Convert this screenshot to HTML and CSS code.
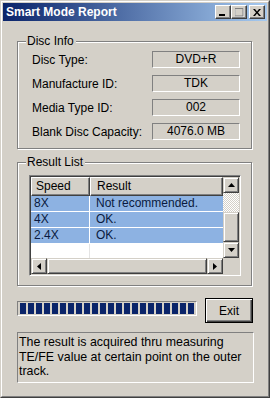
FILE: index.html
```html
<!DOCTYPE html>
<html lang="en">
<head>
<meta charset="UTF-8" />
<title>Smart Mode Report</title>
<link rel="stylesheet" href="styles.css">
</head>
<body>

<div class="window">
  <div class="window-inner">
    <div class="titlebar">
      <span class="title">Smart Mode Report</span>
      <div class="title-buttons">
        <span class="tbtn"><svg width="8" height="7" viewBox="0 0 8 7"><rect x="0" y="5" width="6" height="2" fill="#000"/></svg></span>
        <span class="tbtn"><svg width="9" height="9" viewBox="0 0 9 9"><rect x="0.5" y="0.5" width="8" height="8" fill="none" stroke="#fff"/><rect x="0" y="0" width="8" height="8" fill="none" stroke="#808080"/><rect x="0" y="0" width="8" height="1" fill="#808080"/></svg></span>
        <span class="tbtn close"><svg width="8" height="7" viewBox="0 0 8 7"><path d="M0 0h2l2 2.5 2-2.5h2l-3 3.5 3 3.5h-2l-2-2.5-2 2.5h-2l3-3.5z" fill="#000"/></svg></span>
      </div>
    </div>

    <div class="content">
      <div class="group disc-info">
        <span class="legend">Disc Info</span>
        <div class="info-row"><span>Disc Type:</span><span class="value">DVD+R</span></div>
        <div class="info-row"><span>Manufacture ID:</span><span class="value">TDK</span></div>
        <div class="info-row"><span>Media Type ID:</span><span class="value">002</span></div>
        <div class="info-row"><span>Blank Disc Capacity:</span><span class="value">4076.0 MB</span></div>
      </div>

      <div class="group result-list">
        <span class="legend">Result List</span>
        <div class="listview">
          <div class="list-main">
            <div class="list-header">
              <span class="col-speed">Speed</span>
              <span class="col-result">Result</span>
            </div>
            <div class="list-row selected"><span class="col-speed">8X</span><span class="col-result">Not recommended.</span></div>
            <div class="list-row selected"><span class="col-speed">4X</span><span class="col-result">OK.</span></div>
            <div class="list-row selected"><span class="col-speed">2.4X</span><span class="col-result">OK.</span></div>
            <div class="list-row empty"><span class="col-speed"></span><span class="col-result"></span></div>
          </div>
          <div class="vscroll">
            <span class="sbtn"><svg width="7" height="4" viewBox="0 0 7 4"><path d="M3.5 0L7 4H0z" fill="#000"/></svg></span>
            <span class="track"></span>
            <span class="thumb"></span>
            <span class="sbtn"><svg width="7" height="4" viewBox="0 0 7 4"><path d="M0 0h7L3.5 4z" fill="#000"/></svg></span>
          </div>
          <div class="hscroll">
            <span class="sbtn"><svg width="4" height="7" viewBox="0 0 4 7"><path d="M4 0v7L0 3.5z" fill="#000"/></svg></span>
            <span class="hthumb"></span>
            <span class="sbtn"><svg width="4" height="7" viewBox="0 0 4 7"><path d="M0 0l4 3.5L0 7z" fill="#000"/></svg></span>
          </div>
          <div class="corner"></div>
        </div>
      </div>

      <div class="action-row">
        <div class="progress"><div class="progress-fill"></div></div>
        <button class="exit-btn">Exit</button>
      </div>

      <div class="status">The result is acquired thru measuring TE/FE value at certain point on the outer track.</div>
    </div>
  </div>
</div>

</body>
</html>
```

FILE: styles.css
```css
body {
  margin: 0;
  padding: 0;
  font-family: 'Liberation Sans', Arial, sans-serif;
  font-size: 12px;
  color: #000;
  background: #d4d0c8;
}
.window {
  width: 270px;
  height: 398px;
  box-sizing: border-box;
  border: 1px solid;
  border-color: #d4d0c8 #404040 #404040 #d4d0c8;
  background: #d4d0c8;
}
.window-inner {
  height: 100%;
  box-sizing: border-box;
  border: 1px solid;
  border-color: #fff #808080 #808080 #fff;
  padding: 1px;
  display: flex;
  flex-direction: column;
}
/* Barra del titolo */
.titlebar {
  height: 18px;
  display: flex;
  align-items: center;
  justify-content: space-between;
  background: linear-gradient(to right, #0a246a, #a6caf0);
  padding: 0 2px 0 3px;
}
.title {
  color: #fff;
  font-weight: 700;
  font-size: 12px;
}
.title-buttons {
  display: flex;
  align-items: center;
}
.tbtn {
  width: 16px;
  height: 14px;
  box-sizing: border-box;
  background: #d4d0c8;
  border: 1px solid;
  border-color: #fff #404040 #404040 #fff;
  box-shadow: inset -1px -1px #808080;
  display: flex;
  align-items: center;
  justify-content: center;
}
.tbtn.close {
  margin-left: 2px;
}
.content {
  flex: 1;
  padding: 0 15px 0 14px;
  display: flex;
  flex-direction: column;
}
/* Gruppi */
.group {
  border: 1px solid #808080;
  box-shadow: inset 1px 1px #fff, 1px 1px #fff;
  display: flex;
  flex-direction: column;
}
.legend {
  align-self: flex-start;
  background: #d4d0c8;
  margin: -8px 0 0 8px;
  padding: 0 2px 0 1px;
  line-height: 14px;
}
.disc-info {
  margin-top: 20px;
  height: 108px;
  box-sizing: border-box;
  padding: 0 11px 7px 14px;
  gap: 7px;
}
.disc-info .legend {
  margin-left: -6px;
  margin-bottom: -4px;
}
.info-row {
  display: flex;
  justify-content: space-between;
  align-items: center;
  height: 17px;
}
.value {
  width: 88px;
  height: 17px;
  box-sizing: border-box;
  border: 1px solid;
  border-color: #808080 #fff #fff #808080;
  text-align: center;
  line-height: 15px;
}
.result-list {
  margin-top: 13px;
  padding: 0 10px 9px 11px;
}
.result-list .legend {
  margin-left: -3px;
}
/* Lista */
.listview {
  margin-top: 6px;
  border: 1px solid;
  border-color: #808080 #fff #fff #808080;
  box-shadow: inset 1px 1px #404040, inset -1px -1px #d4d0c8;
  padding: 1px;
  background: #fff;
  display: grid;
  grid-template-columns: 192px 16px;
  grid-template-rows: 81px 16px;
}
.list-main {
  overflow: hidden;
}
.list-header {
  display: flex;
  height: 19px;
  background: #d4d0c8;
}
.list-header span {
  box-sizing: border-box;
  border: 1px solid;
  border-color: #fff #404040 #404040 #fff;
  box-shadow: inset -1px -1px #808080;
  line-height: 17px;
  padding-left: 4px;
}
.col-speed {
  width: 59px;
  flex: none;
}
.col-result {
  flex: 1;
}
.list-header .col-result {
  padding-left: 6px;
}
.list-row {
  display: flex;
  height: 16px;
  line-height: 15px;
  border-bottom: 1px solid #fff;
  box-sizing: border-box;
}
.list-row.selected {
  background: #8db2e2;
  color: #0a1a40;
}
.list-row span {
  padding-left: 3px;
}
.list-row .col-speed {
  border-right: 1px solid #fff;
  box-sizing: border-box;
}
.list-row .col-result {
  padding-left: 6px;
}
.list-row.empty {
  height: 14px;
  border: none;
}
.list-row.empty .col-speed {
  border-right-color: #e4e4e4;
}
.vscroll {
  display: flex;
  flex-direction: column;
}
.sbtn {
  width: 16px;
  height: 16px;
  box-sizing: border-box;
  flex: none;
  background: #d4d0c8;
  border: 1px solid;
  border-color: #d4d0c8 #404040 #404040 #d4d0c8;
  box-shadow: inset 1px 1px #fff, inset -1px -1px #808080;
  display: flex;
  align-items: center;
  justify-content: center;
}
.track {
  flex: 19px 0 0;
  background: repeating-conic-gradient(#fff 0 25%, #d4d0c8 0 50%) 0 0 / 2px 2px;
}
.thumb, .hthumb {
  flex: 1;
  box-sizing: border-box;
  background: #d4d0c8;
  border: 1px solid;
  border-color: #d4d0c8 #404040 #404040 #d4d0c8;
  box-shadow: inset 1px 1px #fff, inset -1px -1px #808080;
}
.hscroll {
  display: flex;
}
.corner {
  background: #d4d0c8;
}
/* Barra di avanzamento e pulsante */
.action-row {
  display: flex;
  justify-content: space-between;
  align-items: flex-start;
  margin-top: 12px;
  margin-right: -1px;
}
.progress {
  margin-top: 3px;
  width: 180px;
  height: 15px;
  box-sizing: border-box;
  border: 1px solid;
  border-color: #808080 #fff #fff #808080;
  padding: 1px 1px 1px 2px;
}
.progress-fill {
  height: 100%;
  background: repeating-linear-gradient(to right, #0a246a 0 6px, transparent 6px 8px);
}
.exit-btn {
  width: 48px;
  height: 25px;
  box-sizing: border-box;
  font-family: inherit;
  font-size: 12px;
  color: #000;
  background: #d4d0c8;
  border: 1px solid #000;
  box-shadow: inset 1px 1px #fff, inset -1px -1px #404040, inset -2px -2px #808080;
  padding: 0;
}
.status {
  margin-top: 9px;
  margin-right: -2px;
  height: 51px;
  box-sizing: border-box;
  border: 1px solid;
  border-color: #808080 #fff #fff #808080;
  padding: 2px 1px;
  line-height: 14.5px;
  font-size: 12.4px;
}
```
